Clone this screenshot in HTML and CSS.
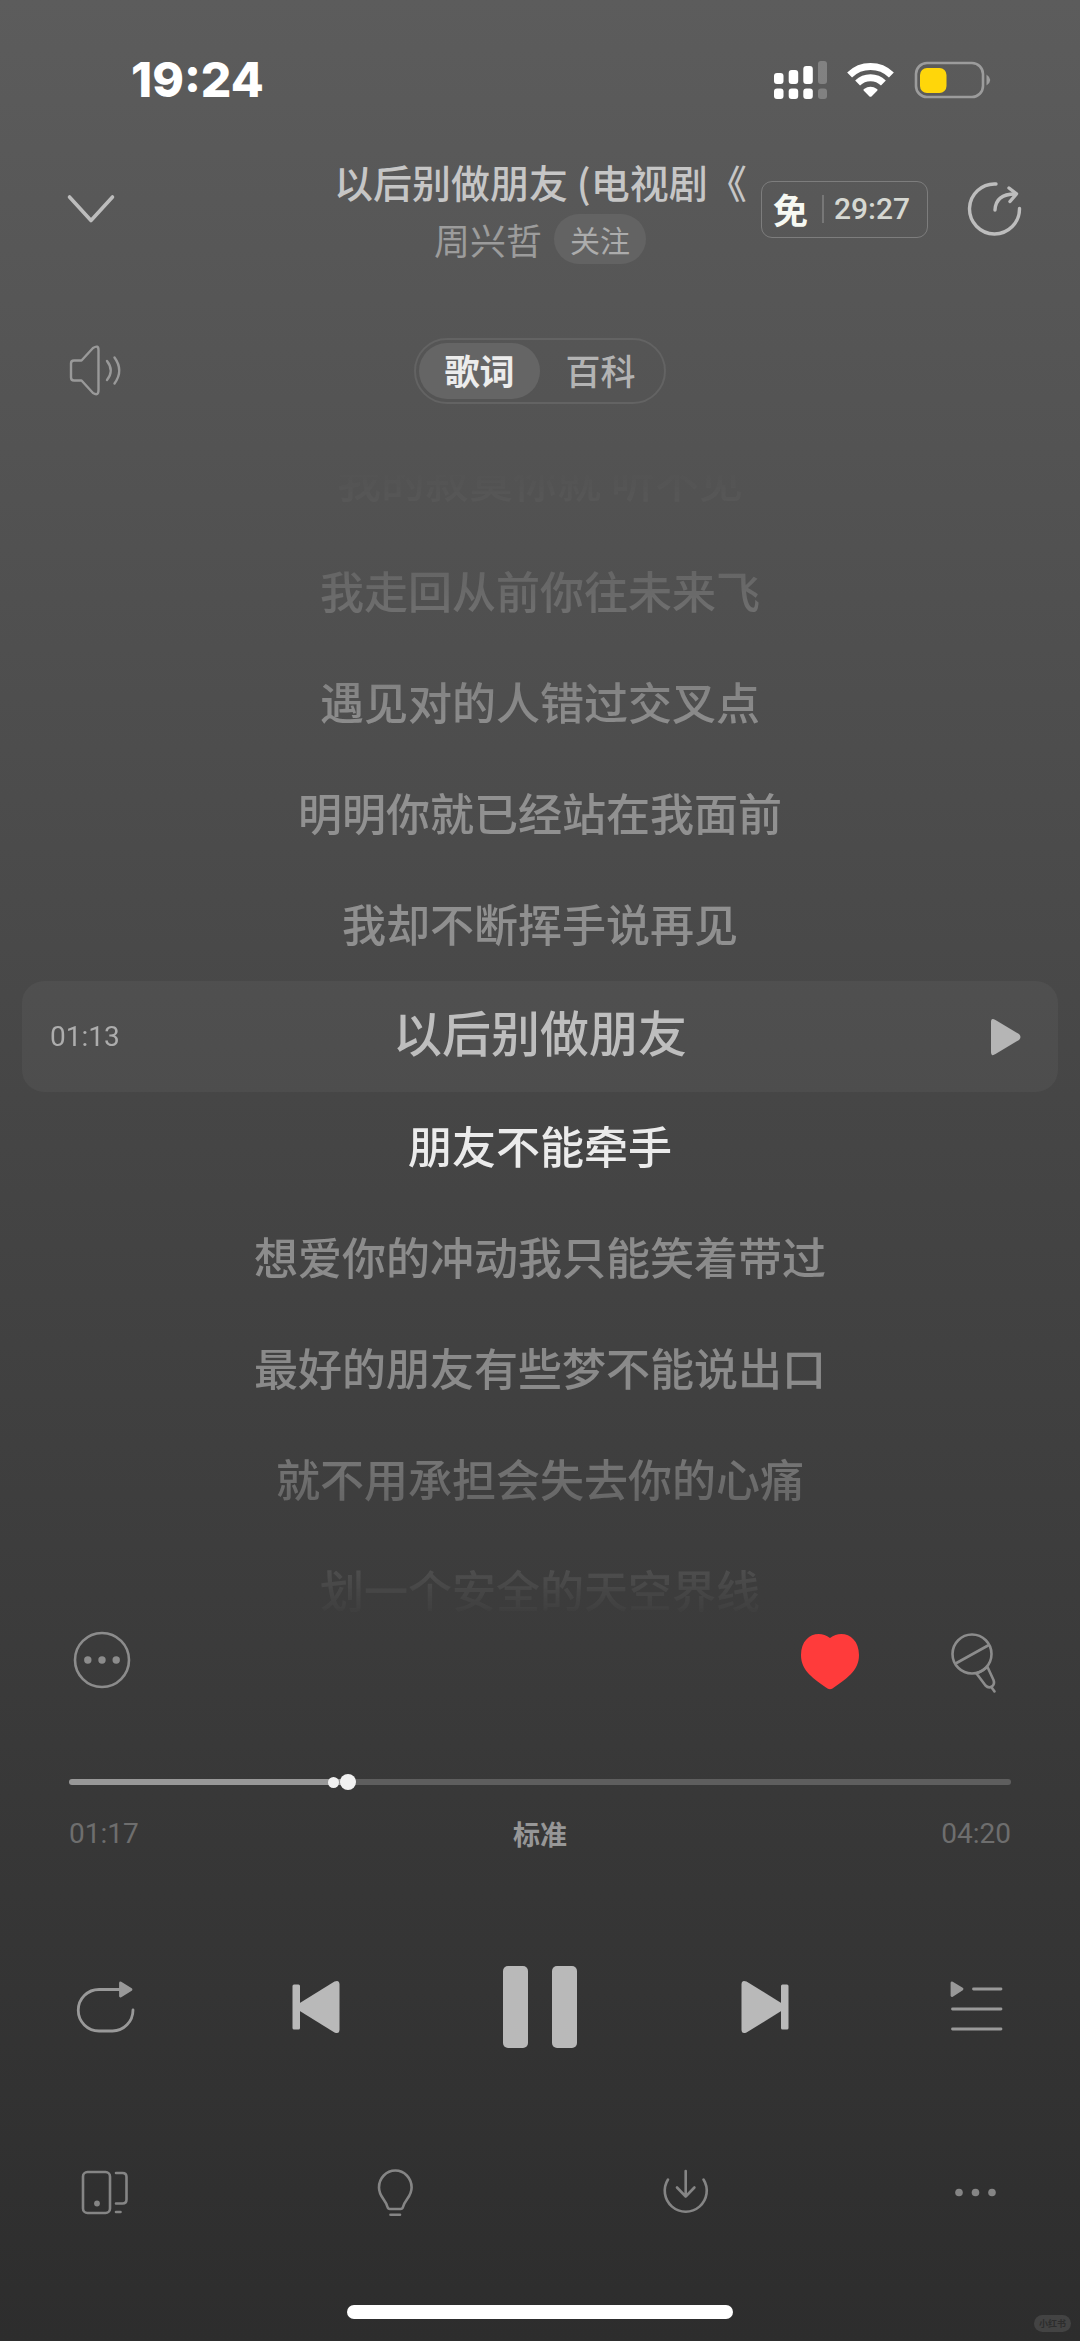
FILE: index.html
```
<!DOCTYPE html>
<html lang="zh-CN">
<head>
<meta charset="utf-8">
<meta name="viewport" content="width=device-width, initial-scale=1">
<title>以后别做朋友 - 周兴哲</title>
<link rel="stylesheet" href="styles.css">
</head>
<body>
<main class="player">
  <div class="status">
    <time class="clock">19:24</time>
    <div class="status-icons">
      <svg width="54" height="40" viewBox="0 0 54 40" fill="#fff" aria-hidden="true">
        <rect x="0" y="13" width="9.5" height="11" rx="3"/><rect x="14.7" y="10" width="9.5" height="14" rx="3"/><rect x="29.3" y="6" width="9.5" height="18" rx="3"/>
        <rect x="0" y="28.5" width="9.5" height="10.5" rx="3"/><rect x="14.7" y="28.5" width="9.5" height="10.5" rx="3"/><rect x="29.3" y="28.5" width="9.5" height="10.5" rx="3"/>
        <g opacity=".24"><rect x="44" y="1" width="9" height="23" rx="3"/><rect x="44" y="28.5" width="9" height="10.5" rx="3"/></g>
      </svg>
      <svg width="48" height="40" viewBox="0 -2 48 40" fill="none" stroke="#fff" stroke-width="7" aria-hidden="true">
        <path d="M2.6 13.1A30 30 0 0 1 44.4 13.1"/><path d="M10.6 21.1A18.5 18.5 0 0 1 36.4 21.1"/>
        <path fill="#fff" stroke="none" d="M22.5 34.4L16.6 28.5Q16 27.6 17 27Q23.5 22.5 30 27Q31 27.6 30.4 28.5L24.5 34.4Q23.5 35.3 22.5 34.4Z"/>
      </svg>
      <svg width="78" height="40" viewBox="0 0 78 40" aria-hidden="true">
        <rect x="2" y="3" width="67" height="34" rx="11" fill="none" stroke="#9c9c9c" stroke-width="2.6"/>
        <rect x="6" y="8" width="26.5" height="25" rx="7" fill="#ffd60a"/>
        <path d="M72.5 14.5Q80 20 72.5 25.5Z" fill="#9c9c9c"/>
      </svg>
    </div>
  </div>

  <header class="header">
    <div class="side">
      <button class="icon" aria-label="收起"><svg width="64" height="64" viewBox="0 0 64 64" fill="none" stroke="#bdbdbd" stroke-width="3.6" stroke-linecap="round" stroke-linejoin="round"><path d="M10.5 20L32 43.5L53.5 20"/></svg></button>
    </div>
    <div class="song">
      <h1 class="title">以后别做朋友 (电视剧《1</h1>
      <p class="artist">周兴哲<button class="follow">关注</button></p>
    </div>
    <div class="side side-end">
      <button class="free"><span class="free-label">免</span><span class="free-time">29:27</span></button>
      <button class="icon" aria-label="分享"><svg width="54" height="54" viewBox="0 0 54 54" fill="none" stroke="#bdbdbd" stroke-width="3.4" stroke-linecap="round" stroke-linejoin="round"><path d="M52.5 26.5A25 25 0 1 1 29 2"/><path d="M28 28C28.5 18 35 12 48 12"/><path d="M42 6L49.5 11.8L43 19.5"/></svg></button>
    </div>
  </header>

  <nav class="tabs-row">
    <div class="side">
      <button class="icon" aria-label="音量"><svg width="64" height="64" viewBox="0 0 64 64" fill="none" stroke="#999" stroke-width="2.4" stroke-linecap="round" stroke-linejoin="round"><path d="M15 21.5H22.5L34 9Q39.5 5.5 39.5 11V51Q39.5 57.5 34 54L22.5 41.5H15Q12 41.5 12 38.5V24.5Q12 21.5 15 21.5Z"/><path d="M48 22Q55.5 31.5 48 41"/><path d="M55.5 18.5Q65 31.5 55.5 44.5"/></svg></button>
    </div>
    <div class="tabs">
      <button class="tab tab-active">歌词</button>
      <button class="tab">百科</button>
    </div>
  </nav>

  <section class="lyrics">
    <p class="line">我的寂寞你就 听不见</p>
    <p class="line">我走回从前你往未来飞</p>
    <p class="line">遇见对的人错过交叉点</p>
    <p class="line">明明你就已经站在我面前</p>
    <p class="line">我却不断挥手说再见</p>
    <div class="line line-picked">
      <time class="digits">01:13</time>
      <p class="picked-text">以后别做朋友</p>
      <button class="icon" aria-label="从此句播放"><svg width="32" height="38" viewBox="0 0 32 38" fill="#b5b5b5"><path d="M1 4Q1 -1 5.5 2L29 16Q32 19 29 22L5.5 36Q1 39 1 34Z"/></svg></button>
    </div>
    <p class="line line-current">朋友不能牵手</p>
    <p class="line">想爱你的冲动我只能笑着带过</p>
    <p class="line">最好的朋友有些梦不能说出口</p>
    <p class="line">就不用承担会失去你的心痛</p>
    <p class="line">划一个安全的天空界线</p>
  </section>

  <div class="actions">
    <button class="icon" aria-label="更多歌词选项"><svg width="58" height="58" viewBox="0 0 58 58" fill="#8c8c8c"><circle cx="29" cy="29" r="27" fill="none" stroke="#8c8c8c" stroke-width="2.6"/><circle cx="14.8" cy="29" r="3.7"/><circle cx="29" cy="29" r="3.7"/><circle cx="43.2" cy="29" r="3.7"/></svg></button>
    <div class="actions-end">
      <button class="icon" aria-label="取消喜欢"><svg width="64" height="64" viewBox="0 0 64 64" fill="#ff3b3b"><path d="M32 10C44 1 61 8 61 27C61 43 48 51 34.5 60.5Q32 62 29.5 60.5C16 51 3 43 3 27C3 8 20 1 32 10Z"/></svg></button>
      <button class="icon" aria-label="K歌"><svg width="64" height="64" viewBox="0 0 64 64" fill="none" stroke="#8c8c8c" stroke-width="2.6" stroke-linecap="round" stroke-linejoin="round"><circle cx="29" cy="26" r="19.5"/><path d="M13.5 35L45 17.5"/><path d="M33.5 45.5L42.5 57.5Q45.5 60.5 49 58.5Q52 56 50.5 52L44.5 39Q39 43.5 33.5 45.5"/><path d="M49 60L51.5 63.5"/></svg></button>
    </div>
  </div>

  <div class="progress">
    <input class="seek" type="range" min="0" max="260" value="76" aria-label="播放进度">
    <span class="climax"></span>
  </div>
  <div class="times">
    <time class="digits">01:17</time>
    <button class="quality">标准</button>
    <time class="digits">04:20</time>
  </div>

  <div class="controls">
    <button class="icon" aria-label="列表循环"><svg width="64" height="64" viewBox="0 0 64 64" fill="none" stroke="#999" stroke-width="2.8" stroke-linecap="round"><path d="M60 35A20.500 21 0 0 1 39.500 56H26A20.700 20.700 0 0 1 26 14.500H47"/><path d="M47.500 8L58 14.500L47.500 21Z" fill="#999" stroke-linejoin="round"/></svg></button>
    <button class="icon" aria-label="上一首"><svg width="64" height="64" viewBox="0 0 64 64" fill="#b9b9b9"><rect x="8.5" y="9.5" width="7.5" height="45" rx="1.5"/><path d="M15 28.5L50.5 6.5Q55.5 4.5 55.5 9.5V54.5Q55.5 59.5 50.5 57.5L15 35.5Z"/></svg></button>
    <button class="icon" aria-label="暂停"><svg width="92" height="92" viewBox="0 0 92 92" fill="#b9b9b9"><rect x="9" y="5" width="25" height="82" rx="5"/><rect x="58" y="5" width="25" height="82" rx="5"/></svg></button>
    <button class="icon" aria-label="下一首"><svg width="64" height="64" viewBox="0 0 64 64" fill="#b9b9b9"><rect x="48" y="9.5" width="7.5" height="45" rx="1.5"/><path d="M49 28.5L13.5 6.5Q8.5 4.5 8.5 9.5V54.5Q8.5 59.5 13.5 57.5L49 35.5Z"/></svg></button>
    <button class="icon" aria-label="播放列表"><svg width="64" height="64" viewBox="0 0 64 64" fill="#999" stroke="#999" stroke-width="2.8" stroke-linecap="round" stroke-linejoin="round"><path d="M9 8L19 14L9 20.5Z"/><path fill="none" d="M30.5 14H58M9.5 34H58M9.5 54H58"/></svg></button>
  </div>

  <div class="tools">
    <button class="icon" aria-label="设备"><svg width="64" height="64" viewBox="0 0 64 64" fill="none" stroke="#858585" stroke-width="2.6" stroke-linecap="round" stroke-linejoin="round"><rect x="10" y="11" width="27" height="41" rx="4.5"/><circle cx="24" cy="42.5" r="2.9" fill="#858585" stroke="none"/><path d="M43 12H49.5Q53.5 12 53.5 16V38.5Q53.5 42.5 49.5 42.5H43M43 51H47.5"/></svg></button>
    <button class="icon" aria-label="灯泡"><svg width="64" height="64" viewBox="0 0 64 64" fill="none" stroke="#858585" stroke-width="2.6" stroke-linecap="round" stroke-linejoin="round"><path d="M27 48Q25 48 24.5 46C22.5 38 16 36 16 26.5A16.300 17 0 0 1 48.600 26.500C48.600 36 42 38 40 46Q39.500 48 37.500 48Z"/><path d="M27.5 53.8H37"/></svg></button>
    <button class="icon" aria-label="下载"><svg width="64" height="64" viewBox="0 0 64 64" fill="none" stroke="#858585" stroke-width="2.6" stroke-linecap="round" stroke-linejoin="round"><path d="M15 18.5A21 21 0 1 0 50.5 18.5"/><path d="M32.7 10V35.5M24 26.5L32.7 35.5L41.4 26.5"/></svg></button>
    <button class="icon" aria-label="更多"><svg width="64" height="64" viewBox="0 0 64 64" fill="#858585"><circle cx="16" cy="31.5" r="3.8"/><circle cx="32.5" cy="31.5" r="3.8"/><circle cx="49" cy="31.5" r="3.8"/></svg></button>
  </div>

  <div class="home-bar"></div>
  <span class="watermark">小红书</span>
</main>
</body>
</html>
```
FILE: styles.css
```
* {
  box-sizing: border-box;
}

body,
h1,
p {
  margin: 0;
}

body {
  font-family: "Noto Sans CJK SC", sans-serif;
  color: #bdbdbd;
}

button {
  padding: 0;
  border: 0;
  background: none;
  color: inherit;
  font: inherit;
}

svg {
  display: block;
  overflow: visible;
}

.player {
  position: relative;
  display: flex;
  flex-direction: column;
  height: 100vh;
  overflow: hidden;
  padding-bottom: 22px;
  background: linear-gradient(#5c5c5c, #2d2d2d);
}

.icon {
  flex: none;
}

.digits,
.free-time {
  font-family: Roboto, sans-serif;
}

/* Status bar */
.status {
  display: flex;
  justify-content: space-between;
  align-items: flex-start;
  height: 154px;
  padding: 60px 88px 0 131px;
}

.clock {
  color: #fff;
  font: 800 48px/40px Inter, sans-serif;
}

.status-icons {
  display: flex;
  gap: 19px;
}

/* Song header and tabs */
.header,
.tabs-row {
  display: grid;
  grid-template-columns: minmax(0, 1fr) 416px minmax(0, 1fr);
  align-items: center;
}

.side {
  display: flex;
  align-items: center;
  padding-left: 59px;
}

.side-end {
  justify-content: space-between;
  padding: 0 59px 0 13px;
}

.song {
  display: flex;
  flex-direction: column;
  gap: 6px;
}

.title {
  overflow: hidden;
  padding-left: 2px;
  color: #c6c6c6;
  font-size: 39px;
  font-weight: 500;
  line-height: 54px;
  white-space: nowrap;
}

.artist {
  display: flex;
  justify-content: center;
  align-items: center;
  gap: 12px;
  color: #9c9c9c;
  font-size: 36px;
  line-height: 50px;
}

.follow {
  height: 50px;
  padding: 0 16px;
  border-radius: 25px;
  background: #636363;
  color: #acacac;
  font-size: 30px;
  line-height: 48px;
}

.free {
  display: flex;
  align-items: center;
  height: 57px;
  padding: 0 17px 0 11px;
  border: 1px solid #7d7d7d;
  border-radius: 11px;
}

.free-label {
  color: #f6f8f2;
  font-size: 35px;
  font-weight: 700;
  line-height: 52px;
}

.free-time {
  margin-left: 14px;
  padding-left: 10px;
  border-left: 2px solid #777;
  color: #d6d8d2;
  font-size: 30px;
  font-weight: 500;
  line-height: 28px;
}

.tabs-row {
  margin-top: 74px;
}

.tabs {
  display: flex;
  justify-self: center;
  width: 252px;
  height: 66px;
  padding: 3px;
  border: 2px solid #636363;
  border-radius: 33px;
}

.tab {
  flex: 1;
  padding-bottom: 2px;
  border-radius: 28px;
  color: #b3b3b3;
  font-size: 35px;
  font-weight: 500;
  line-height: 54px;
}

.tab-active {
  background: #656565;
  color: #ececec;
  font-weight: 700;
}

/* Lyrics */
.lyrics {
  flex: 1 1 0;
  min-height: 0;
  margin-top: 22px;
  overflow: hidden;
  mask-image: linear-gradient(
    transparent 44px,
    rgba(0, 0, 0, 0.08) 74px,
    rgba(0, 0, 0, 0.38) 166px,
    rgba(0, 0, 0, 0.85) 278px,
    #000 324px,
    #000 calc(100% - 226px),
    transparent calc(100% - 4px)
  );
}

.line {
  height: 111px;
  color: rgba(255, 255, 255, 0.39);
  font-size: 44px;
  font-weight: 500;
  line-height: 106px;
  text-align: center;
  white-space: nowrap;
}

.line-current {
  color: #ebebeb;
}

.line-picked {
  display: grid;
  grid-template-columns: 1fr auto 1fr;
  align-items: center;
  margin: 0 22px;
  padding: 0 36px 0 28px;
  border-radius: 22px;
  background: rgba(255, 255, 255, 0.04);
  color: #adadad;
}

.line-picked .icon {
  justify-self: end;
}

.picked-text {
  padding-bottom: 12px;
  padding-left: 8px;
  color: #bebebe;
  font-size: 49px;
  line-height: 98px;
}

.digits {
  font-size: 28px;
  font-weight: 400;
  line-height: 32px;
  text-align: left;
}

/* Song actions */
.actions,
.actions-end {
  display: flex;
  justify-content: space-between;
  align-items: center;
}

.actions {
  height: 68px;
  padding: 0 73px;
}

.actions-end {
  gap: 81px;
}

/* Progress */
.progress {
  position: relative;
  margin: 80px 69px 0;
}

.seek {
  display: block;
  width: 100%;
  height: 16px;
  margin: 0;
  appearance: none;
  background: none;
}

.seek::-webkit-slider-runnable-track {
  height: 6px;
  border-radius: 3px;
  background: linear-gradient(90deg, #989898 29%, #5e5e5e 29%);
}

.seek::-webkit-slider-thumb {
  width: 16px;
  height: 16px;
  margin-top: -5px;
  border-radius: 50%;
  appearance: none;
  background: #f1f1f1;
}

.climax {
  position: absolute;
  top: 3px;
  left: 27.5%;
  width: 11px;
  height: 11px;
  border-radius: 50%;
  background: #f1f1f1;
}

.times {
  display: flex;
  justify-content: space-between;
  align-items: center;
  margin: 28px 69px 0;
  color: #6e6e6e;
}

.quality {
  color: #979797;
  font-size: 27px;
  font-weight: 700;
  line-height: 32px;
}

/* Playback controls */
.controls,
.tools {
  display: flex;
  justify-content: space-between;
  align-items: center;
  padding: 0 73px;
}

.controls {
  margin-top: 111px;
}

.tools {
  margin-top: 108px;
}

.home-bar {
  align-self: center;
  width: 386px;
  height: 14px;
  margin-top: 80px;
  border-radius: 7px;
  background: #fff;
}

.watermark {
  position: absolute;
  right: 9px;
  bottom: 9px;
  width: 37px;
  border-radius: 9px;
  background: #434343;
  color: #2d2d2d;
  font-size: 9px;
  font-weight: 700;
  line-height: 17px;
  text-align: center;
}
```
